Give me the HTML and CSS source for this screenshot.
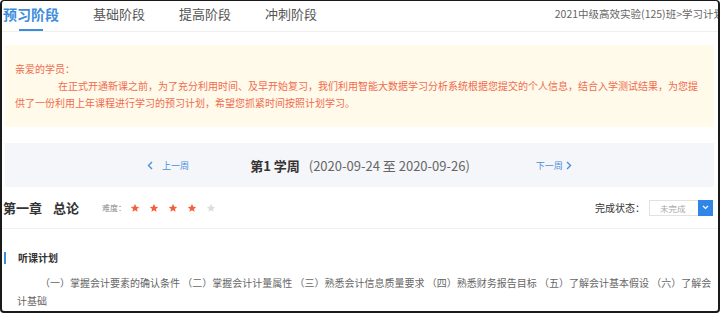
FILE: index.html
```html
<!DOCTYPE html>
<html lang="zh-CN">
<head>
  <meta charset="UTF-8" />
  <meta name="viewport" content="width=device-width, initial-scale=1.0" />
  <title>学习计划</title>
  <link rel="stylesheet" href="styles.css">
</head>
<body>
  <div class="frame">
    <div class="tabs">
      <div class="tab active">预习阶段</div>
      <div class="tab">基础阶段</div>
      <div class="tab">提高阶段</div>
      <div class="tab">冲刺阶段</div>
      <div class="crumb">2021中级高效实验(125)班&gt;学习计划</div>
    </div>

    <div class="notice">
      <p>亲爱的学员：</p>
      <p class="indent">在正式开通新课之前，为了充分利用时间、及早开始复习，我们利用智能大数据学习分析系统根据您提交的个人信息，结合入学测试结果，为您提供了一份利用上年课程进行学习的预习计划，希望您抓紧时间按照计划学习。</p>
    </div>

    <div class="week-nav">
      <a class="week-link prev">
        <svg width="6" height="9" viewBox="0 0 6 9"><path d="M5 1L1.5 4.5 5 8" fill="none" stroke="currentColor" stroke-width="1.4"/></svg>
        上一周
      </a>
      <div class="week-title"><b>第1 学周</b><span>(2020-09-24 至 2020-09-26)</span></div>
      <a class="week-link next">
        下一周
        <svg width="6" height="9" viewBox="0 0 6 9"><path d="M1 1l3.5 3.5L1 8" fill="none" stroke="currentColor" stroke-width="1.4"/></svg>
      </a>
    </div>

    <div class="chapter">
      <div class="chapter-name"><span>第一章</span><span>总论</span></div>
      <div class="level">
        难度：
        <svg class="star on" viewBox="0 0 24 24"><path d="M12 2l2.9 6.9 7.1.6-5.4 4.7 1.7 7-6.3-3.8-6.3 3.8 1.7-7L1.9 9.5l7.1-.6z"/></svg>
        <svg class="star on" viewBox="0 0 24 24"><path d="M12 2l2.9 6.9 7.1.6-5.4 4.7 1.7 7-6.3-3.8-6.3 3.8 1.7-7L1.9 9.5l7.1-.6z"/></svg>
        <svg class="star on" viewBox="0 0 24 24"><path d="M12 2l2.9 6.9 7.1.6-5.4 4.7 1.7 7-6.3-3.8-6.3 3.8 1.7-7L1.9 9.5l7.1-.6z"/></svg>
        <svg class="star on" viewBox="0 0 24 24"><path d="M12 2l2.9 6.9 7.1.6-5.4 4.7 1.7 7-6.3-3.8-6.3 3.8 1.7-7L1.9 9.5l7.1-.6z"/></svg>
        <svg class="star" viewBox="0 0 24 24"><path d="M12 2l2.9 6.9 7.1.6-5.4 4.7 1.7 7-6.3-3.8-6.3 3.8 1.7-7L1.9 9.5l7.1-.6z"/></svg>
      </div>
      <div class="status">
        完成状态：
        <div class="select">
          <span class="select-value">未完成</span>
          <span class="select-btn">
            <svg width="7" height="5" viewBox="0 0 7 5"><path d="M1 1l2.5 2.5L6 1" fill="none" stroke="#fff" stroke-width="1.2"/></svg>
          </span>
        </div>
      </div>
    </div>

    <div class="plan">
      <div class="plan-title">听课计划</div>
      <p class="plan-text">（一）掌握会计要素的确认条件 （二）掌握会计计量属性 （三）熟悉会计信息质量要求 （四）熟悉财务报告目标 （五）了解会计基本假设 （六）了解会计基础</p>
    </div>
  </div>
</body>
</html>
```

FILE: styles.css
```css
* {
  box-sizing: border-box;
  margin: 0;
  padding: 0;
}

body {
  font-family: "Noto Sans CJK SC", sans-serif;
  background: #fff;
  color: #333;
}

.frame {
  width: 720px;
  height: 313px;
  border: 2px solid #1a1a1a;
  border-top-width: 1px;
  border-bottom-width: 2px;
  border-radius: 4px;
  overflow: hidden;
}

.tabs {
  display: flex;
  align-items: center;
  gap: 34px;
  height: 31px;
  padding-left: 1px;
  border-bottom: 1px solid #f0f0f0;
  white-space: nowrap;
}

.tab {
  position: relative;
  font-size: 13px;
  line-height: 26px;
  height: 30px;
  color: #555;
}

.tab.active {
  font-size: 14px;
  font-weight: 700;
  color: #3e8ddd;
}

.tab.active::after {
  content: "";
  position: absolute;
  left: 16px;
  width: 24px;
  bottom: 0;
  height: 2px;
  background: #3e8ddd;
}

.crumb {
  margin-left: auto;
  margin-right: -6px;
  font-size: 10.5px;
  color: #666;
  line-height: 26px;
  height: 30px;
}

.notice {
  margin: 13px 4px 0 3px;
  height: 82px;
  padding: 15px 8px 0 10px;
  background: #fffaea;
  color: #f06b4e;
  font-size: 10px;
  line-height: 17px;
}

.notice .indent {
  text-indent: 43px;
}

.week-nav {
  display: flex;
  align-items: center;
  justify-content: center;
  margin: 16px 4px 0 3px;
  height: 44px;
  background: #f5f6f9;
}

.week-link {
  display: flex;
  align-items: center;
  gap: 9px;
  font-size: 9px;
  color: #4a8fdd;
}

.week-link.next {
  gap: 3px;
  margin-left: 66px;
}

.week-link.prev {
  margin-right: 61px;
}

.week-title {
  font-size: 13px;
  color: #666;
}

.week-title b {
  color: #333;
  margin-right: 9px;
}

.chapter {
  display: flex;
  align-items: center;
  height: 42px;
  padding: 0 5px 0 1px;
  border-bottom: 1px solid #f0f0f0;
}

.chapter-name {
  font-size: 13px;
  font-weight: 700;
  color: #333;
  display: flex;
  gap: 11px;
}

.level {
  display: flex;
  align-items: center;
  margin-left: 23px;
  font-size: 8px;
  color: #888;
  gap: 9px;
}

.star {
  width: 10px;
  height: 10px;
  fill: #ddd;
}

.star.on {
  fill: #f5603a;
}

.level .star:first-child {
  margin-left: -5px;
}

.status {
  margin-left: auto;
  display: flex;
  align-items: center;
  font-size: 10px;
  color: #333;
}

.select {
  display: flex;
  height: 16px;
  margin-left: 4px;
}

.select-value {
  width: 49px;
  border: 1px solid #e2e2e2;
  border-right: none;
  font-size: 8.5px;
  color: #aaa;
  line-height: 14px;
  padding-left: 10px;
}

.select-btn {
  width: 15px;
  background: #2f86e6;
  display: flex;
  align-items: center;
  justify-content: center;
}

.plan {
  padding: 23px 0 0 2px;
}

.plan-title {
  font-size: 10px;
  font-weight: 700;
  line-height: 14px;
  color: #333;
  padding-left: 12px;
  border-left: 2px solid #3e8ddd;
  height: 12px;
  display: flex;
  align-items: center;
}

.plan-text {
  margin-top: 10px;
  padding: 0 0 0 13px;
  text-indent: 23px;
  font-size: 10px;
  line-height: 18px;
  color: #666;
  width: 710px;
}
```
